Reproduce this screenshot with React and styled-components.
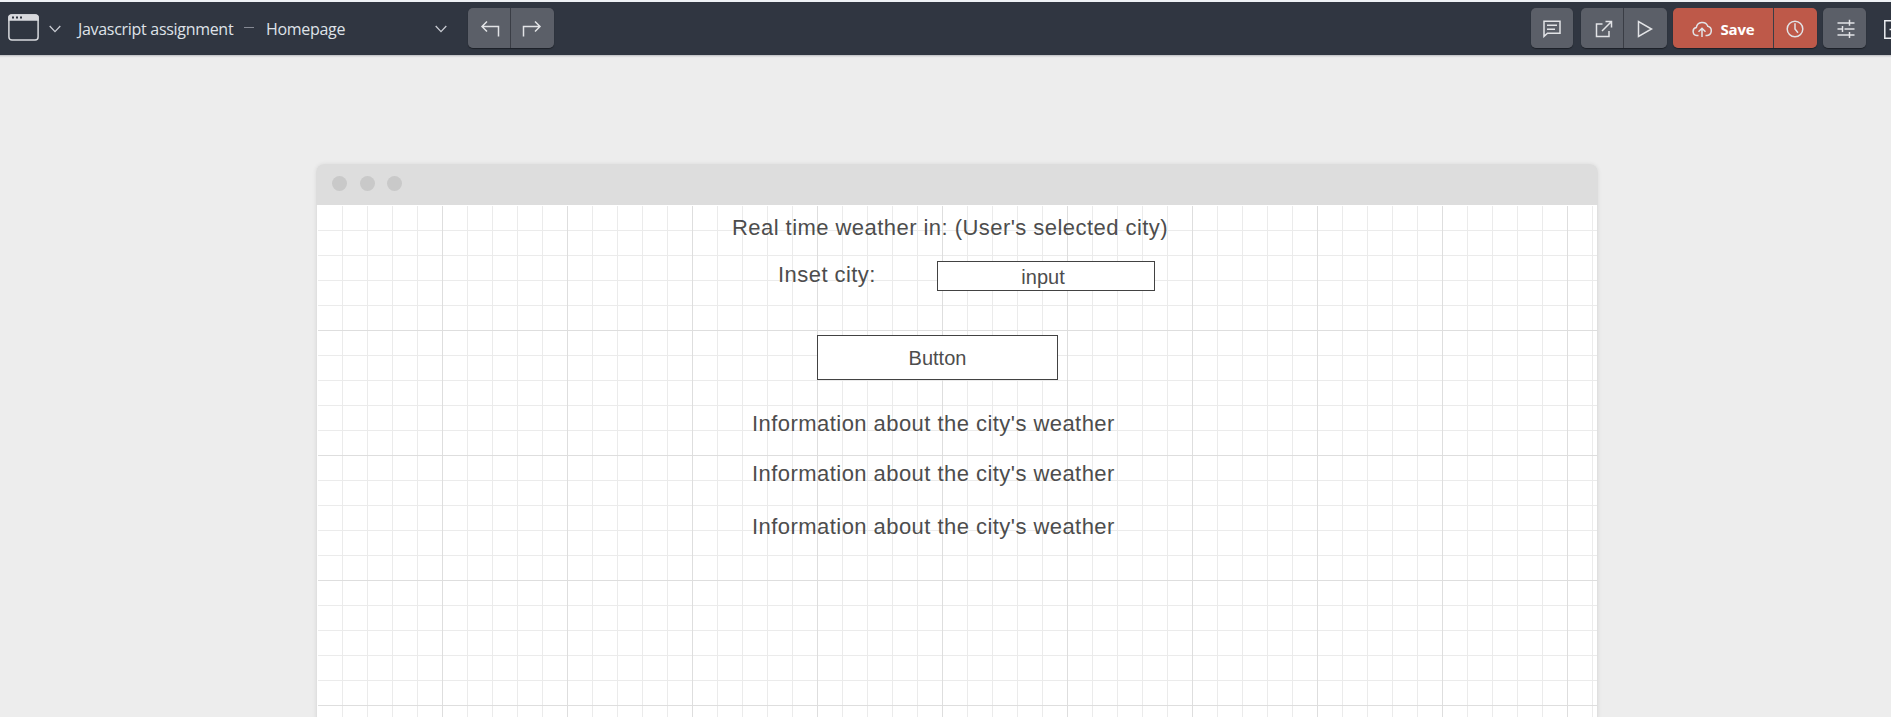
import React from 'react';
import styled, { createGlobalStyle } from 'styled-components';

const GlobalStyle = createGlobalStyle`
  * { box-sizing: border-box; }
  body { margin: 0; background: #ededed; overflow: hidden; }
`;

const Page = styled.div`
  display: flex;
  flex-direction: column;
  height: 717px;
  overflow: hidden;
  background: #ededed;
`;

const Header = styled.header`
  display: flex;
  flex: none;
  align-items: flex-start;
  height: 56px;
  padding: 6px 0 0 8px;
  overflow: hidden;
  background: #303641;
  border-top: 2px solid #eef1f5;
  border-bottom: 1px solid #c6c7ca;
  box-shadow: 0 1px 1px #dddddf;
  font-family: 'Open Sans', 'Noto Sans', sans-serif;
  color: #dfe2e8;
`;

const Icon = styled.svg`
  display: block;
  flex: none;
  fill: none;
  stroke: ${(p) => p.$color || '#e2e3e6'};
  stroke-width: ${(p) => p.$weight || 1.5};
`;

const Title = styled.span`
  width: ${(p) => p.$width}px;
  margin-left: ${(p) => p.$gap}px;
  padding-top: 1px;
  line-height: 40px;
  font-size: 16px;
  letter-spacing: -0.3px;
  white-space: nowrap;
`;

const Dash = styled.span`
  width: 10px;
  height: 1px;
  margin: 19px 0 0 9px;
  background: #858993;
`;

const Chevron = styled(Icon)`
  margin: 17px 0 0 ${(p) => p.$gap}px;
`;

const ButtonGroup = styled.div`
  display: flex;
  gap: 1px;
  margin-left: ${(p) => p.$gap}px;
  height: 40px;
  border-radius: 5px;
  overflow: hidden;
  background: #3a3d45;
  box-shadow: 0 1px 1px #1c2027;
`;

const ToolButton = styled.button`
  display: flex;
  align-items: center;
  justify-content: center;
  gap: 9px;
  width: ${(p) => p.$width || 42}px;
  height: 40px;
  padding: ${(p) => p.$pad || '1px 0 0'};
  border: 0;
  background: ${(p) => (p.$primary ? '#be5949' : '#5b5f68')};
  color: #fff;
  font: 700 15px 'Open Sans', 'Noto Sans', sans-serif;
  letter-spacing: -0.2px;
`;

const Spacer = styled.div`
  flex: 1;
`;

const Workspace = styled.main`
  flex: none;
  width: 1282px;
  margin: 108px 0 0 316px;
  border-radius: 8px 8px 0 0;
  box-shadow: 0 0 4px rgba(0, 0, 0, 0.08);
`;

const WindowBar = styled.div`
  display: flex;
  align-items: center;
  gap: 12.5px;
  height: 41px;
  padding: 0 0 2px 16px;
  border-radius: 8px 8px 0 0;
  background: #dddddd;
`;

const Dot = styled.span`
  width: 15px;
  height: 15px;
  border-radius: 50%;
  background: #c9c9c9;
`;

const Canvas = styled.div`
  position: relative;
  height: 520px;
  border: solid #e0e0e0;
  border-width: 0 1px;
  background-color: #fff;
  background-image:
    linear-gradient(90deg, #dedede 1px, transparent 1px),
    linear-gradient(#dedede 1px, transparent 1px),
    linear-gradient(90deg, #ebebeb 1px, transparent 1px),
    linear-gradient(#ebebeb 1px, transparent 1px);
  background-size: 125px 125px, 125px 125px, 25px 25px, 25px 25px;
  box-shadow: inset 1px 1px #fff;
`;

const Label = styled.div`
  position: absolute;
  left: ${(p) => p.$x}px;
  top: ${(p) => p.$y}px;
  font: 22px/26px 'Liberation Sans', Arial, sans-serif;
  letter-spacing: 0.45px;
  color: #4d4d4d;
  white-space: nowrap;
`;

const Box = styled.div`
  position: absolute;
  left: ${(p) => p.$x}px;
  top: ${(p) => p.$y}px;
  width: ${(p) => p.$w}px;
  height: ${(p) => p.$h}px;
  padding: ${(p) => p.$pad};
  border: 1px solid #424242;
  background: #fff;
  color: #4d4d4d;
  font: 20px/${(p) => p.$h - 2}px 'Liberation Sans', Arial, sans-serif;
  text-align: center;
`;

const Down = ({ gap }) => (
  <Chevron $gap={gap} $weight={1.3} $color="#c9ccd3" width="12" height="8" viewBox="0 0 12 8">
    <path d="M.7 1 6 6.6 11.3 1" />
  </Chevron>
);

export default function App() {
  return (
    <>
      <GlobalStyle />
      <Page>
        <Header>
          <Icon width="31" height="34" viewBox="0 0 31 34" $color="#d8dade" $weight={1.5}>
            <rect x=".9" y="6.9" width="29.2" height="25.2" rx="3" />
            <path d="M1 12V9.5Q1 7 4 7h23q3 0 3 2.5V12z" fill="#d8dade" />
            <path d="M4 9.4h2M8 9.4h2M12 9.4h2" stroke="#303641" strokeWidth="2" />
          </Icon>
          <Down gap={10} />
          <Title $gap={17} $width={157}>Javascript assignment</Title>
          <Dash />
          <Title $gap={12} $width={155}>Homepage</Title>
          <Down gap={14} />
          <ButtonGroup $gap={21}>
            <ToolButton aria-label="Undo" $pad="1px 0 0 2px">
              <Icon width="20" height="18" viewBox="0 0 20 18"><path d="M7 1.5 2 6.5l5 5M2 6.5h16.5v10" /></Icon>
            </ToolButton>
            <ToolButton $width={43} aria-label="Redo" $pad="1px 2px 0 0">
              <Icon width="20" height="18" viewBox="0 0 20 18"><path d="m13 1.5 5 5-5 5M18 6.5H1.5v10" /></Icon>
            </ToolButton>
          </ButtonGroup>
          <Spacer />
          <ButtonGroup $gap={0}>
            <ToolButton aria-label="Comments">
              <Icon width="18" height="18" viewBox="0 0 18 18"><path d="M1 1.2h16v12H4.5L1 16.4zM4 5.2h10M4 9.2h8" /></Icon>
            </ToolButton>
          </ButtonGroup>
          <ButtonGroup $gap={8}>
            <ToolButton aria-label="Share" $pad="1px 0 0 3px">
              <Icon width="18" height="18" viewBox="0 0 18 18"><path d="M7.5 4H1.5v12.5H14V11M7 11 16.5 1.5M10.5 1.5h6v6" /></Icon>
            </ToolButton>
            <ToolButton $width={43} aria-label="Preview" $pad="1px 2px 0 0">
              <Icon width="18" height="18" viewBox="0 0 18 18"><path d="M2.5 1.5v15L15.5 9z" /></Icon>
            </ToolButton>
          </ButtonGroup>
          <ButtonGroup $gap={6}>
            <ToolButton $primary $width={100}>
              <Icon width="20" height="18" viewBox="0 0 20 18"><path d="M6.5 15.5H4.8A4 4 0 0 1 4.3 7.6 6 6 0 0 1 15.8 6.3 4.7 4.7 0 0 1 15.2 15.5H13.5M10 17V8.5M6.5 11.8 10 8.3l3.5 3.5" /></Icon>
              Save
            </ToolButton>
            <ToolButton $primary $width={43} aria-label="History" $pad="1px 2px 0 0">
              <Icon width="18" height="18" viewBox="0 0 18 18"><circle cx="9" cy="9" r="7.8" /><path d="M9 3.2V9l3 3.8" /></Icon>
            </ToolButton>
          </ButtonGroup>
          <ButtonGroup $gap={6}>
            <ToolButton $width={43} aria-label="Settings" $pad="1px 0 0 2px">
              <Icon width="18" height="20" viewBox="0 0 18 20"><path d="M.5 4h17M.5 10h5M7.5 10h10M.5 16h17M12.5 .8v6M5.5 7v6M12.5 13v6" /></Icon>
            </ToolButton>
          </ButtonGroup>
          <Icon width="25" height="40" viewBox="0 0 25 40" $color="#eceef1">
            <path d="M25 12.8h-6.2v17.4H25M23.5 21.5h2" />
          </Icon>
        </Header>
        <Workspace>
          <WindowBar><Dot /><Dot /><Dot /></WindowBar>
          <Canvas>
            <Label $x={415} $y={10}>Real time weather in: (User's selected city)</Label>
            <Label $x={461} $y={57}>Inset city:</Label>
            <Box $x={620} $y={56} $w={218} $h={30} $pad="1px 6px 0 0">input</Box>
            <Box $x={500} $y={130} $w={241} $h={45} $pad="1px 0 0">Button</Box>
            <Label $x={435} $y={206}>Information about the city's weather</Label>
            <Label $x={435} $y={256}>Information about the city's weather</Label>
            <Label $x={435} $y={309}>Information about the city's weather</Label>
          </Canvas>
        </Workspace>
      </Page>
    </>
  );
}
